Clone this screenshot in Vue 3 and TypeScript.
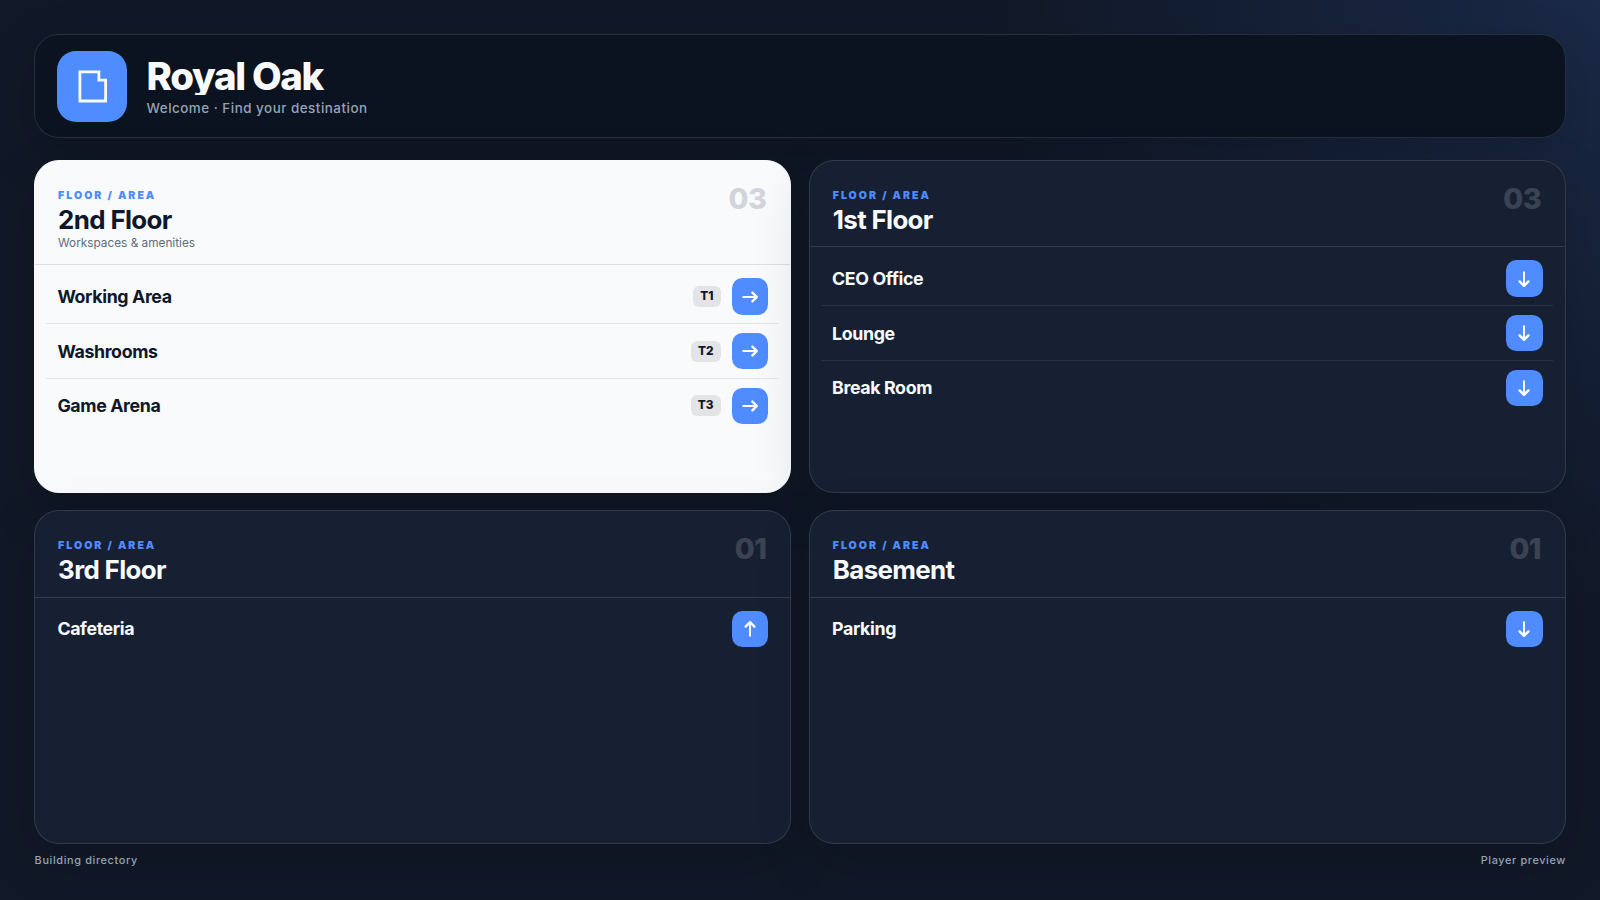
<script setup lang="ts">
type Direction = 'right' | 'down' | 'up'

interface Place {
  name: string
  tag?: string
  direction: Direction
}

interface Floor {
  title: string
  subtitle?: string
  active?: boolean
  places: Place[]
}

const floors: Floor[] = [
  {
    title: '2nd Floor',
    subtitle: 'Workspaces & amenities',
    active: true,
    places: [
      { name: 'Working Area', tag: 'T1', direction: 'right' },
      { name: 'Washrooms', tag: 'T2', direction: 'right' },
      { name: 'Game Arena', tag: 'T3', direction: 'right' },
    ],
  },
  {
    title: '1st Floor',
    places: [
      { name: 'CEO Office', direction: 'down' },
      { name: 'Lounge', direction: 'down' },
      { name: 'Break Room', direction: 'down' },
    ],
  },
  { title: '3rd Floor', places: [{ name: 'Cafeteria', direction: 'up' }] },
  { title: 'Basement', places: [{ name: 'Parking', direction: 'down' }] },
]

const count = (floor: Floor): string => String(floor.places.length).padStart(2, '0')
</script>

<template>
  <div class="screen">
    <header class="masthead">
      <div class="logo">
        <svg width="30" height="33" viewBox="0 0 30 33" fill="none" stroke="currentColor" stroke-width="2.8">
          <path d="M1.9 1.9H20.9V10.2H27.6V31H1.9Z" />
        </svg>
      </div>
      <div class="heading">
        <h1>Royal Oak</h1>
        <p>Welcome · Find your destination</p>
      </div>
    </header>

    <main class="floors">
      <section v-for="floor in floors" :key="floor.title" class="floor" :class="{ active: floor.active }">
        <div class="floor-head">
          <div>
            <div class="eyebrow">FLOOR / AREA</div>
            <h2>{{ floor.title }}</h2>
            <p v-if="floor.subtitle" class="subtitle">{{ floor.subtitle }}</p>
          </div>
          <div class="count">{{ count(floor) }}</div>
        </div>
        <ul class="places">
          <li v-for="place in floor.places" :key="place.name" class="place">
            <span class="name">{{ place.name }}</span>
            <span v-if="place.tag" class="tag">{{ place.tag }}</span>
            <span class="arrow" :class="place.direction">
              <svg width="18" height="18" viewBox="0 0 18 18" fill="none" stroke="currentColor" stroke-linecap="round" stroke-linejoin="round">
                <path d="M2.2 9H15" stroke-width="1.9" />
                <path d="M11.4 4.6L15.8 9L11.4 13.4" stroke-width="2.4" />
              </svg>
            </span>
          </li>
        </ul>
      </section>
    </main>

    <footer class="foot">
      <span>Building directory</span>
      <span>Player preview</span>
    </footer>
  </div>
</template>

<style>
body {
  margin: 0;
  background: #111827;
}
</style>

<style scoped>
.screen {
  box-sizing: border-box;
  width: 1600px;
  height: 900px;
  padding: 34px;
  display: flex;
  flex-direction: column;
  overflow: hidden;
  color: #f8fafc;
  font-family: Inter, "Liberation Sans", sans-serif;
  background: radial-gradient(circle at 100% 0%, rgba(79, 140, 255, 0.15), transparent 34%), #111827;
}

.masthead {
  box-sizing: border-box;
  height: 104px;
  flex: none;
  display: flex;
  align-items: center;
  gap: 19.5px;
  padding: 0 22px;
  border: 1px solid rgba(255, 255, 255, 0.12);
  border-radius: 25px;
  background: #0a131f;
  box-shadow: 0 18px 55px rgba(0, 0, 0, 0.16);
}

.logo {
  width: 70px;
  height: 71px;
  border-radius: 19px;
  background: #4f8cff;
  display: grid;
  place-items: center;
}

.logo svg {
  margin: 1px 0 0 1px;
}

h1 {
  margin: 1px 0 0;
  height: 38px;
  overflow: hidden;
  font-size: 38.4px;
  line-height: 38px;
  font-weight: 800;
  letter-spacing: -0.034em;
}

.heading p {
  margin: 5px 0 0;
  font-size: 13.4px;
  line-height: 17px;
  font-weight: 500;
  letter-spacing: 0.038em;
  color: #94a3b8;
}

.floors {
  flex: none;
  margin-top: 22px;
  display: grid;
  grid-template-columns: 1fr 1fr;
  grid-auto-rows: 333.2px;
  gap: 17.2px 17.4px;
}

.floor {
  border: 1px solid rgba(255, 255, 255, 0.12);
  border-radius: 25px;
  background: #172032;
  box-shadow: 0 18px 55px rgba(0, 0, 0, 0.16);
}

.floor.active {
  background: #f8fafc;
  border-color: #f8fafc;
  color: #0f172a;
}

.floor-head {
  display: flex;
  justify-content: space-between;
  padding: 27.8px 24px 12.2px 23.1px;
  border-bottom: 1px solid rgba(255, 255, 255, 0.12);
}

.active .floor-head {
  border-color: rgba(15, 23, 42, 0.12);
}

.eyebrow {
  font-size: 10.6px;
  line-height: 14px;
  font-weight: 900;
  letter-spacing: 0.187em;
  color: #4f8cff;
}

h2 {
  margin: 3.2px 0 0;
  font-size: 25.9px;
  line-height: 28px;
  font-weight: 700;
  letter-spacing: -0.025em;
}

.subtitle {
  margin: 0;
  font-size: 11.8px;
  line-height: 18px;
  color: #636b7a;
}

.count {
  font-size: 28.8px;
  line-height: 20px;
  font-weight: 800;
  letter-spacing: -0.02em;
  opacity: 0.16;
}

.places {
  list-style: none;
  margin: 0;
  padding: 4.6px 11.6px 0 11.4px;
}

.place {
  height: 53.6px;
  display: flex;
  align-items: center;
  padding: 0 10.8px 0 11px;
  border-bottom: 1px solid rgba(255, 255, 255, 0.08);
}

.active .place {
  border-color: rgba(15, 23, 42, 0.09);
}

.place:last-child {
  border-bottom-color: transparent;
}

.name {
  flex: 1;
  font-size: 17.8px;
  font-weight: 700;
  letter-spacing: -0.021em;
}

.tag {
  height: 21px;
  margin-right: 11px;
  padding: 0 7px;
  border-radius: 6px;
  background: rgba(0, 0, 0, 0.085);
  font-size: 11.8px;
  line-height: 21px;
  font-weight: 800;
}

.arrow {
  width: 36.4px;
  height: 36.4px;
  border-radius: 10.5px;
  background: #4f8cff;
  color: #fff;
  display: grid;
  place-items: center;
}

.down svg {
  transform: rotate(90deg);
}

.up svg {
  transform: rotate(-90deg);
}

.foot {
  margin-top: 9.2px;
  display: flex;
  justify-content: space-between;
  padding-left: 0.6px;
  font-size: 10.9px;
  line-height: 14px;
  font-weight: 500;
  letter-spacing: 0.058em;
  color: #94a3b8;
}
</style>
